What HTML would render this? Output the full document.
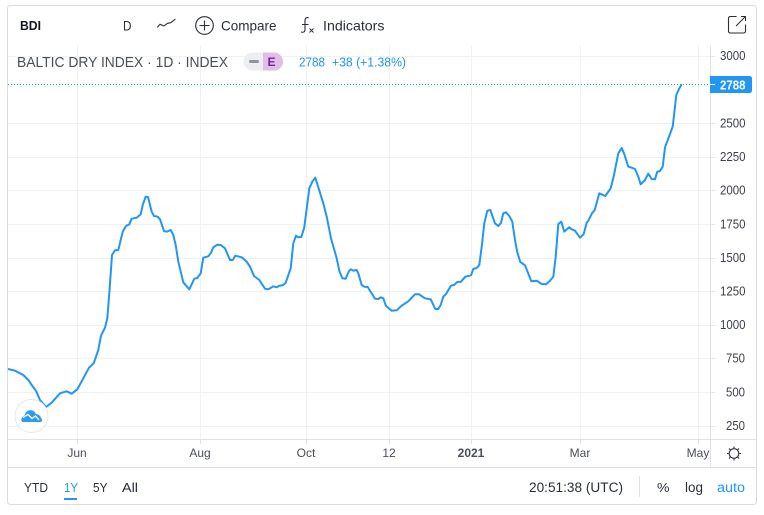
<!DOCTYPE html>
<html><head><meta charset="utf-8"><style>
html,body{margin:0;padding:0;background:#fff;width:764px;height:515px;overflow:hidden}
svg{display:block}
text{font-family:"Liberation Sans",sans-serif}
text:not([fill]){fill:#2a2e39}
text.p{font-size:13px;fill:#3c3f4a}
text.t{font-size:12px;fill:#4a4e59;text-anchor:middle}
</style></head><body>
<svg width="764" height="515" viewBox="0 0 764 515" xmlns="http://www.w3.org/2000/svg">
<rect x="7.5" y="5.5" width="749" height="499" rx="3" fill="#fff" stroke="#dadce0"/>
<g stroke="#f0f1f3" stroke-width="1" fill="none">
<path d="M8 56.5H710M8 123.5H710M8 157.5H710M8 190.5H710M8 224.5H710M8 258.5H710M8 291.5H710M8 325.5H710M8 358.5H710M8 392.5H710M8 426.5H710"/>
<path d="M77.5 45V439M200.5 45V439M306.5 45V439M389.5 45V439M471.5 45V439M580.5 45V439M698.5 45V439"/>
</g>
<g stroke="#dfe1e6" fill="none">
<path d="M8 439.5H756M8 467.5H756M710.5 45V467"/>
<path d="M77.5 439V444M200.5 439V444M306.5 439V444M389.5 439V444M471.5 439V444M580.5 439V444M698.5 439V444"/>
<path d="M710 56.5H715M710 123.5H715M710 157.5H715M710 190.5H715M710 224.5H715M710 258.5H715M710 291.5H715M710 325.5H715M710 358.5H715M710 392.5H715M710 426.5H715"/>
<path d="M639.5 476V497"/>
</g>
<path d="M8 84.5H710" stroke="#2196f3" stroke-width="1" stroke-dasharray="1 2" fill="none"/>
<polyline fill="none" stroke="#2196f3" stroke-width="2" stroke-linejoin="round" points="8,369 15,370.7 23.3,375 28.3,380 33.3,387.3 36,390.7 40,400 46,407 51.7,402.7 60,393.3 66.7,391.3 71.7,393.7 77.3,389.3 83.3,378.3 89,367.7 93.7,363.3 98.3,350 101,335.7 105,327.7 107.3,318.3 109.3,293.3 112,255 115,250.3 118.3,250 122.7,231.7 126,226 129.3,224.3 131.7,218.7 136.7,217.7 140.7,214.3 142.7,205 145.7,196.7 148,197 151.7,211.7 154,216 157.7,216.7 160,219.3 164,231 166.7,231.7 170.7,230 173.3,235 175.7,245 178.3,261.7 183.3,282.3 189.3,289.3 194.3,278.7 197.3,278 200.7,273.3 203.3,257.7 208.3,256.3 210.7,253.3 213.3,247.3 217.3,244.7 220.7,245 225,248.3 230,260 232.7,260 235.3,255.7 241.7,257.3 246.7,261.7 250,266.7 254,276 259.3,280 265,288.7 268.3,289.3 273.3,286.3 276.7,287.3 279.3,285.7 282.7,285.3 285.7,282.7 290.7,268.3 293.3,243.3 296,235.7 298.3,237.3 301.3,237 304.3,227.3 309.3,188.3 312.3,181.7 315.3,177.7 323.3,203.3 326.7,216.7 331,238.3 336.7,258.3 339.3,270.7 342.3,278.3 345.7,278.7 349,271 351,269.3 353.3,270.7 356.7,270 358.3,273.3 361.7,285 364.3,286.7 367.7,287 375,298.7 378.3,299 380.7,297.3 383.3,298.3 386,306 391.7,310.7 396.7,310.3 401.7,305.7 408.3,301.3 415,294.3 419,294.3 425,298.3 430.7,299.3 435.3,309 438.3,309 440.7,305 443.3,296.7 446,294 451,285.7 454,285 457.3,282 461,281.7 465.3,276.7 471,275.3 473.3,269 476.7,268 479.3,265 481.7,246.7 484.3,223.3 487.3,210.7 490.3,210 495,223.3 498.3,226 501,222.7 503.3,213.3 506,212.3 509.3,216 512.3,221.7 515,240 517.3,252.3 520.3,262 525,265.3 531.3,281.3 536.7,280.7 541.7,284 546,284.3 550,280.7 553.3,276.7 555.7,256.7 558.3,224 561.3,221.7 564.3,231.7 569,227.3 571.7,229.3 575,230.7 580,237.7 583.7,234 586.7,222.7 588.3,220.7 592,213.3 594.7,210 599.3,193.3 605.3,196 610.7,188.3 614,175 618.3,153.3 621.7,148 624,153.3 628.3,166.7 630.7,167.3 635,169 638.3,176.7 640.7,184.3 645,180 648.3,173.7 651.7,179 655,179.3 657.3,171.7 660,171 662.7,166.7 665,147.5 672.7,126.7 676.3,95 679,89 681.7,84.3"/>

<!-- top toolbar -->
<text x="20" y="30" font-size="13" font-weight="bold" fill="#131722" textLength="21" lengthAdjust="spacingAndGlyphs">BDI</text>
<text x="123" y="30.500" font-size="13.500" textLength="8.500" lengthAdjust="spacingAndGlyphs">D</text>
<path d="M157.300 27.500L160 24.200L164 26L167.300 23.400L170.700 22.700L175.500 19" fill="none" stroke="#2a2e39" stroke-width="1.100" stroke-linejoin="round"/>
<circle cx="204.500" cy="25.500" r="8.800" fill="none" stroke="#2a2e39" stroke-width="1.100"/>
<path d="M204.500 20.500V30.500M199.500 25.500H209.500" stroke="#2a2e39" stroke-width="1.100"/>
<text x="221" y="30.500" font-size="14" textLength="55.500" lengthAdjust="spacingAndGlyphs">Compare</text>
<path d="M301 32C303.500 32.700 305 32 305 29.500V20.500C305 18 306.500 17 308.700 17.800M302 24.500H308.500" fill="none" stroke="#2a2e39" stroke-width="1.100"/>
<path d="M309.500 28.500L313.500 32.500M313.500 28.500L309.500 32.500" stroke="#2a2e39" stroke-width="0.900"/>
<text x="323" y="30.500" font-size="14" textLength="61.500" lengthAdjust="spacingAndGlyphs">Indicators</text>
<path d="M736.500 16.500H730.500Q728.500 16.500 728.500 18.500V31Q728.500 33 730.500 33H743.500Q745.500 33 745.500 31V24.500" fill="none" stroke="#2a2e39" stroke-width="1.100"/>
<path d="M741 16.500H745.500V21M745.500 16.500L736 26" fill="none" stroke="#2a2e39" stroke-width="1"/>

<!-- legend -->
<text x="17" y="67" font-size="14.500" fill="#4a4e59" textLength="211" lengthAdjust="spacingAndGlyphs">BALTIC DRY INDEX · 1D · INDEX</text>
<path d="M263 52.500H252.500A9 9 0 0 0 252.500 70.500H263Z" fill="#eceef1"/>
<path d="M263 52.500H274A9 9 0 0 1 274 70.500H263Z" fill="#e1bee7"/>
<rect x="249" y="60" width="10" height="3" rx="1.500" fill="#8f929b"/>
<text x="267.500" y="66" font-size="12" font-weight="bold" fill="#7b1fa2">E</text>
<text x="299" y="66.500" font-size="12.500" fill="#2196f3" textLength="26" lengthAdjust="spacingAndGlyphs">2788</text>
<text x="332" y="66.500" font-size="12.500" fill="#2196f3" textLength="74" lengthAdjust="spacingAndGlyphs">+38 (+1.38%)</text>

<!-- price axis -->
<text class="p" x="720" y="60" textLength="25.500" lengthAdjust="spacingAndGlyphs">3000</text>
<text class="p" x="720" y="127.500" textLength="25.500" lengthAdjust="spacingAndGlyphs">2500</text>
<text class="p" x="720" y="161" textLength="25.500" lengthAdjust="spacingAndGlyphs">2250</text>
<text class="p" x="720" y="194.500" textLength="25.500" lengthAdjust="spacingAndGlyphs">2000</text>
<text class="p" x="720" y="228.500" textLength="25.500" lengthAdjust="spacingAndGlyphs">1750</text>
<text class="p" x="720" y="262" textLength="25.500" lengthAdjust="spacingAndGlyphs">1500</text>
<text class="p" x="720" y="295.500" textLength="25.500" lengthAdjust="spacingAndGlyphs">1250</text>
<text class="p" x="720" y="329" textLength="25.500" lengthAdjust="spacingAndGlyphs">1000</text>
<text class="p" x="726" y="362.500" textLength="19" lengthAdjust="spacingAndGlyphs">750</text>
<text class="p" x="726" y="396.500" textLength="19" lengthAdjust="spacingAndGlyphs">500</text>
<text class="p" x="726" y="430" textLength="19" lengthAdjust="spacingAndGlyphs">250</text>
<path d="M710 76H749.500Q752 76 752 78.500V90.500Q752 93 749.500 93H710Z" fill="#2196f3"/>
<path d="M710 84.500H715" stroke="#fff"/>
<text x="720" y="89.500" font-size="13" font-weight="bold" fill="#fff" textLength="25.500" lengthAdjust="spacingAndGlyphs">2788</text>

<!-- time axis -->
<text class="t" x="77" y="457">Jun</text>
<text class="t" x="200" y="457">Aug</text>
<text class="t" x="306" y="457">Oct</text>
<text class="t" x="389" y="457">12</text>
<text class="t" x="471" y="457" font-weight="bold">2021</text>
<text class="t" x="580" y="457">Mar</text>
<text class="t" x="698" y="457">May</text>
<g fill="none" stroke="#2a2e39" stroke-width="1.100">
<circle cx="734" cy="453.500" r="4.800"/>
<path d="M734 446.500V448M734 459V460.500M727 453.500H728.500M739.500 453.500H741M729 448.500L730.200 449.700M737.800 457.300L739 458.500M739 448.500L737.800 449.700M730.200 457.300L729 458.500"/>
</g>

<!-- logo -->
<circle cx="31.500" cy="416" r="16.500" fill="#fff" stroke="#e6e7ea"/>
<path d="M21.500 421C21 418 22.500 416.500 24.500 415.500C25.500 412 28 410 31 410.200C33.500 410.300 35 412 36 414C38 414 40.500 415.500 41 418C42.500 419 42.500 421 41.500 421.500C41 422 40 422 39 422H23C22 422 21.700 421.500 21.500 421Z" fill="#2e9bf0"/>
<path d="M23 417.500L28 414.500L32 418.500L35.500 416L39 420" fill="none" stroke="#fff" stroke-width="1.300"/>

<!-- bottom toolbar -->
<text x="24" y="492" font-size="13" textLength="24" lengthAdjust="spacingAndGlyphs">YTD</text>
<text x="64" y="492" font-size="13" fill="#2196f3" textLength="14" lengthAdjust="spacingAndGlyphs">1Y</text>
<rect x="64" y="498" width="13" height="2" fill="#2196f3"/>
<text x="93" y="492" font-size="13" textLength="14.500" lengthAdjust="spacingAndGlyphs">5Y</text>
<text x="122" y="492" font-size="13" textLength="16" lengthAdjust="spacingAndGlyphs">All</text>
<text x="529" y="492" font-size="13.500" textLength="94" lengthAdjust="spacingAndGlyphs">20:51:38 (UTC)</text>
<text x="657" y="492" font-size="13" textLength="12.500" lengthAdjust="spacingAndGlyphs">%</text>
<text x="685" y="492" font-size="13.500" textLength="18" lengthAdjust="spacingAndGlyphs">log</text>
<text x="717" y="492" font-size="13.500" fill="#2196f3" textLength="28" lengthAdjust="spacingAndGlyphs">auto</text>
</svg>
</body></html>
